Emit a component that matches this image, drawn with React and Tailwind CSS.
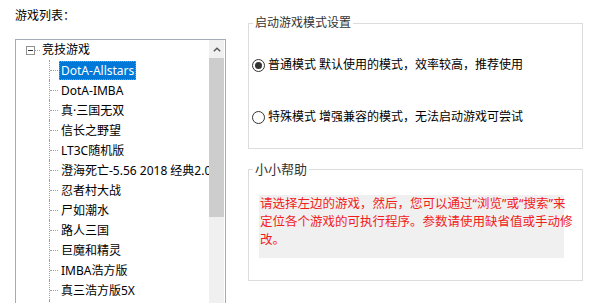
import React from "react";

const games = [
  "DotA-Allstars",
  "DotA-IMBA",
  "真·三国无双",
  "信长之野望",
  "LT3C随机版",
  "澄海死亡-5.56 2018 经典2.0",
  "忍者村大战",
  "尸如潮水",
  "路人三国",
  "巨魔和精灵",
  "IMBA浩方版",
  "真三浩方版5X",
  "真三国无双6.8",
];

function Radio({ checked, children }) {
  return (
    <div className="flex items-center h-[16px]">
      <span className="w-[13px] h-[13px] rounded-full border border-[#333] flex items-center justify-center shrink-0">
        {checked && <span className="w-[7px] h-[7px] rounded-full bg-[#333]" />}
      </span>
      <span className="ml-[3px] whitespace-nowrap">{children}</span>
    </div>
  );
}

export default function App() {
  return (
    <div className="w-[600px] h-[303px] overflow-hidden bg-white flex text-[12px] text-black font-['Noto_Sans','Noto_Sans_CJK_SC',sans-serif]">
      {/* Left: game tree */}
      <div className="w-[248px] shrink-0 flex flex-col pl-[15px]">
        <div className="mt-[8px] h-[16px] leading-[16px]">游戏列表：</div>
        <div className="mt-[15px] w-[211px] h-[280px] border border-[#a5acb5] flex shrink-0">
          <div className="flex-1 overflow-hidden">
            <div className="flex items-center h-[20px]">
              <span className="ml-[10px] w-[9px] h-[9px] border border-[#919191] flex items-center justify-center shrink-0">
                <span className="w-[5px] h-px bg-[#333]" />
              </span>
              <span className="w-[5px] border-t border-dotted border-[#a0a0a0]" />
              <span className="ml-[2px] whitespace-nowrap leading-[16px]">竞技游戏</span>
            </div>
            {games.map((name, i) => (
              <div key={i} className="flex h-[20px] pl-[33px]">
                <span className="w-[9px] h-full border-l border-dotted border-[#a0a0a0] flex items-center shrink-0">
                  <span className="w-full border-t border-dotted border-[#a0a0a0]" />
                </span>
                <span
                  className={
                    i === 0
                      ? "ml-px mt-px h-[19px] leading-[17px] px-px whitespace-nowrap bg-[#0078d7] text-white border border-dotted border-[#e08a2c]"
                      : "ml-px mt-px h-[19px] leading-[17px] px-px whitespace-nowrap border border-transparent"
                  }
                >
                  {name}
                </span>
              </div>
            ))}
          </div>
          <div className="w-[15px] mr-px flex flex-col bg-[#f0f0f0] shrink-0">
            <div className="h-[18px] flex items-center justify-center">
              <svg width="8" height="5" viewBox="0 0 8 5">
                <polyline points="0.8,4.3 4,1.2 7.2,4.3" fill="none" stroke="#555" strokeWidth="1.4" />
              </svg>
            </div>
            <div className="h-[159px] bg-[#cdcdcd]" />
            <div className="flex-1" />
          </div>
        </div>
      </div>

      {/* Right: settings */}
      <div className="w-[335px] pt-[15px] flex flex-col">
        <fieldset className="h-[134px] border border-[#dcdcdc] px-[3px]">
          <legend className="ml-px px-[2px] leading-[16px] text-[#333]">启动游戏模式设置</legend>
          <div className="mt-[26px]">
            <Radio checked>普通模式 默认使用的模式，效率较高，推荐使用</Radio>
          </div>
          <div className="mt-[36px]">
            <Radio>特殊模式 增强兼容的模式，无法启动游戏可尝试</Radio>
          </div>
        </fieldset>

        <fieldset className="mt-[12px] h-[120px] border border-[#dcdcdc] px-[3px]">
          <legend className="ml-px px-[2px] leading-[16px] text-[#333] text-[13px]">小小帮助</legend>
          <div className="mt-[18px] ml-[7px] w-[305px] h-[63px] bg-[#f0f0f0] pl-px text-[12.5px] leading-[18px] text-[#f21c1c]">
            <div className="whitespace-nowrap">请选择左边的游戏，然后，您可以通过“浏览”或“搜索”来</div>
            <div className="whitespace-nowrap">定位各个游戏的可执行程序。参数请使用缺省值或手动修</div>
            <div className="whitespace-nowrap">改。</div>
          </div>
        </fieldset>
      </div>
    </div>
  );
}
